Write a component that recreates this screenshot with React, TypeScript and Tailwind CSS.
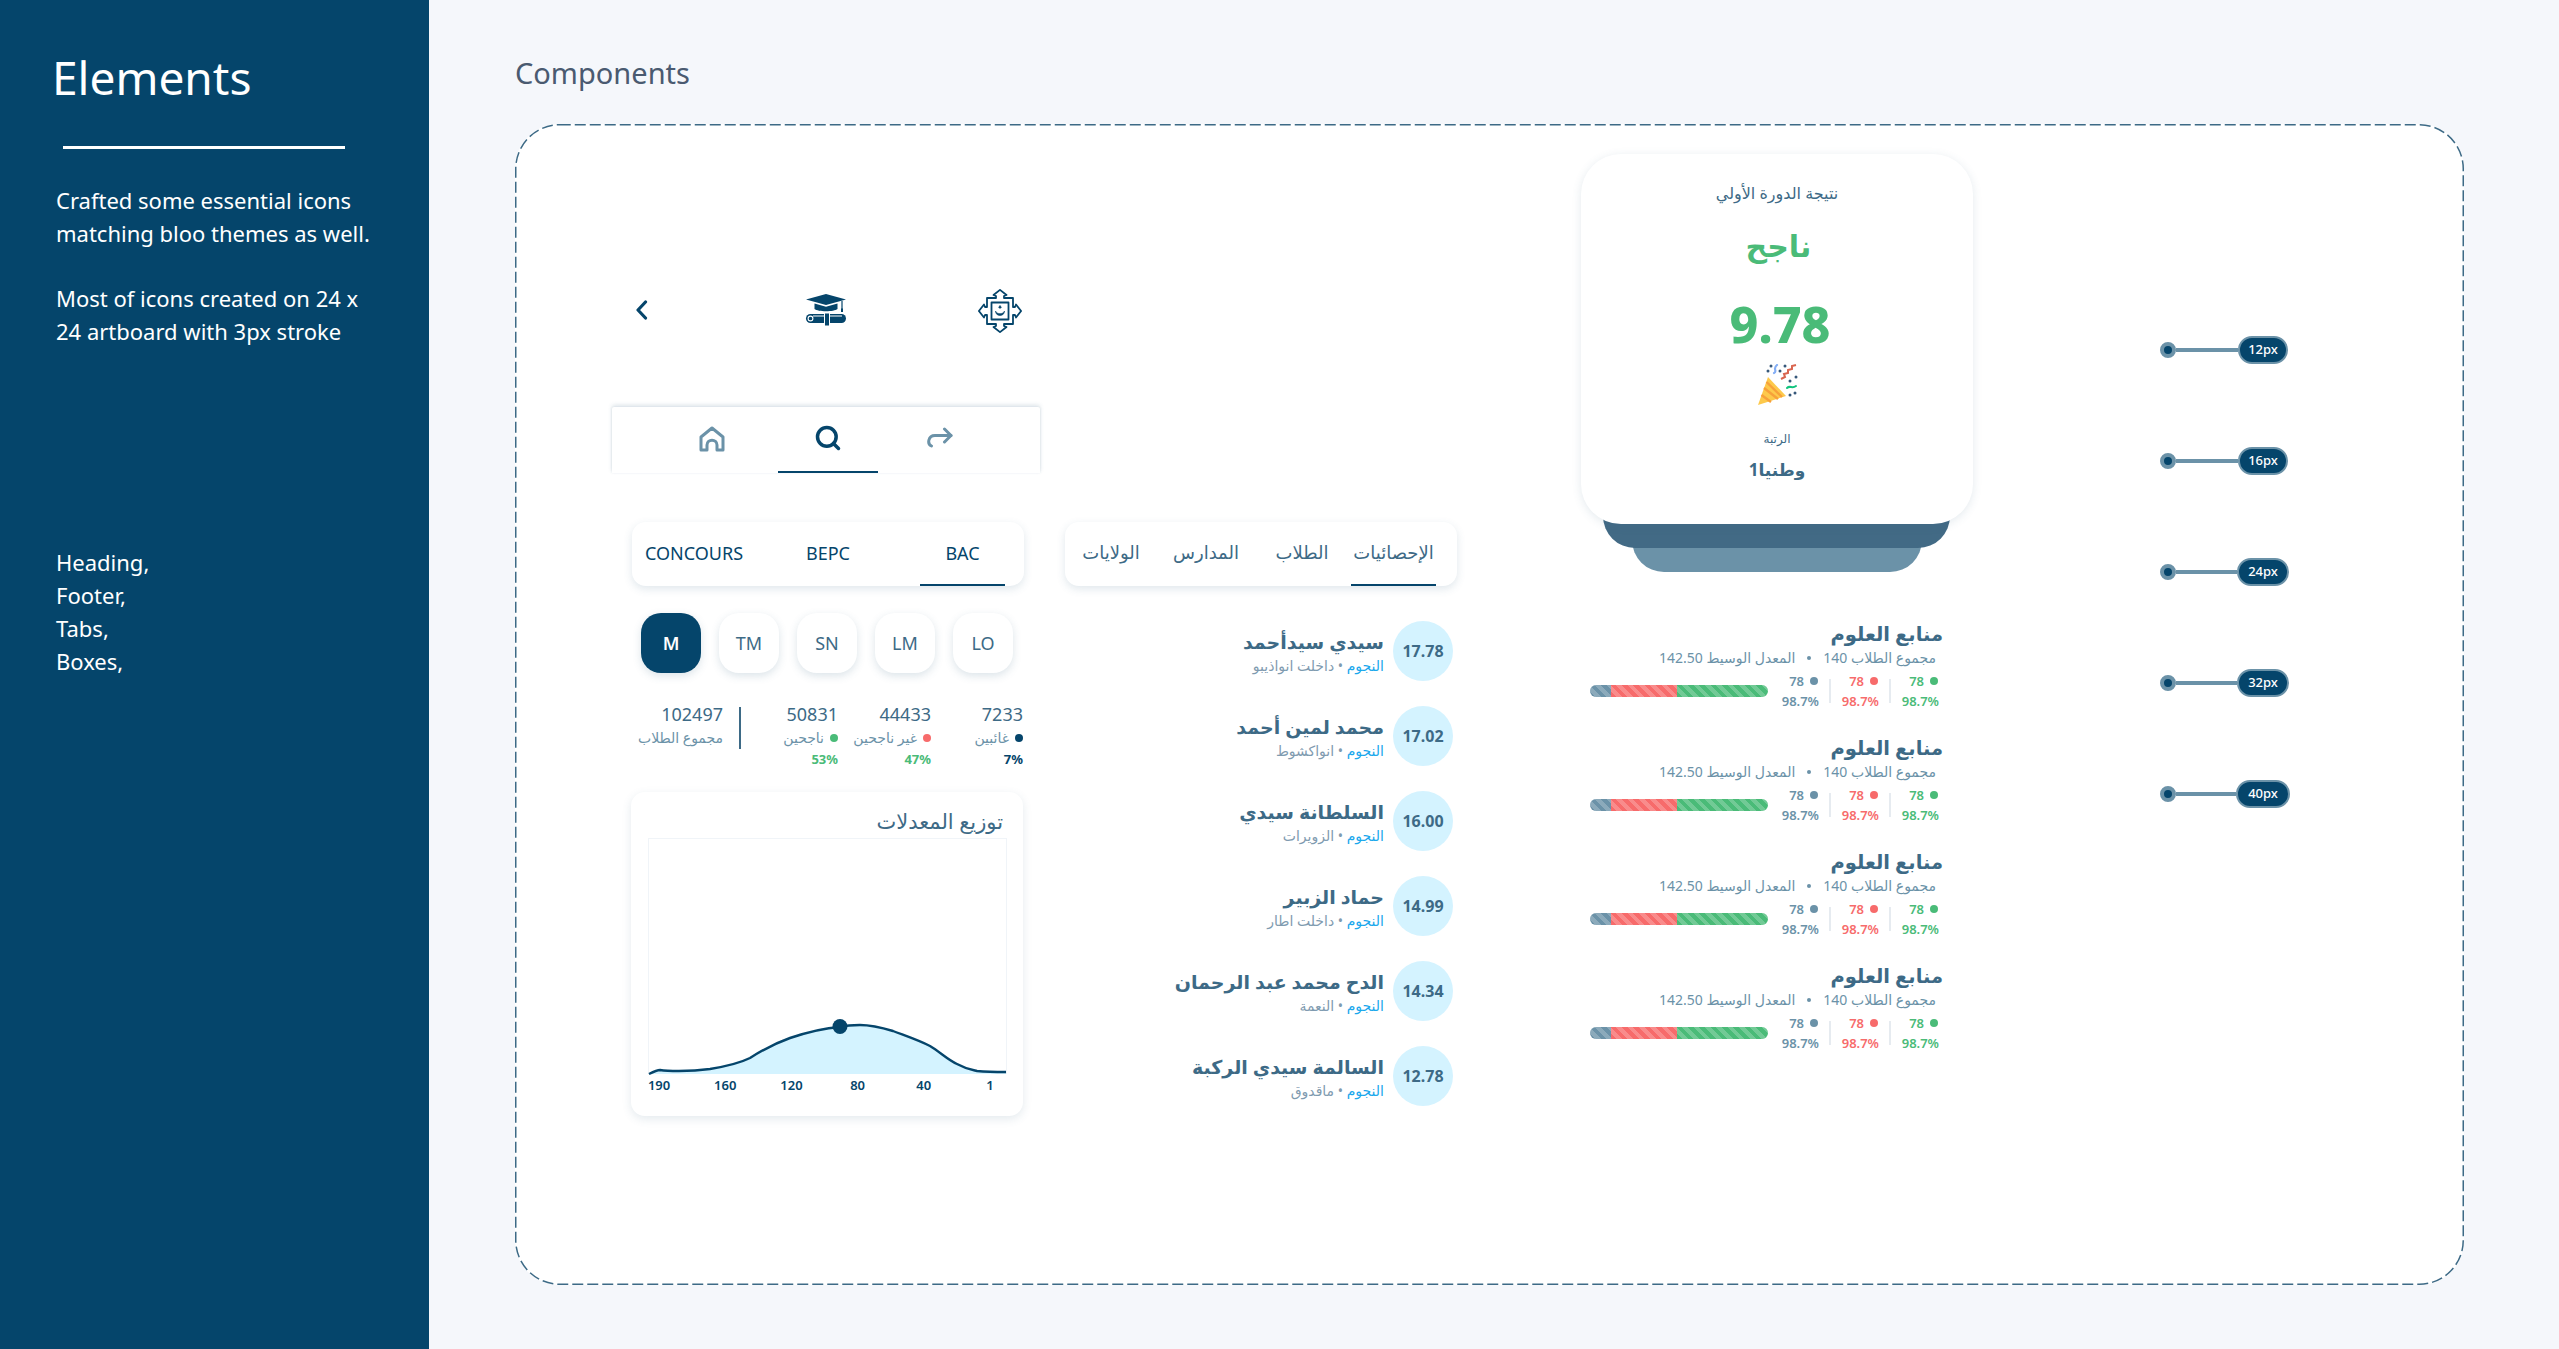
import React from 'react';
import { Search } from 'lucide-react';

const FONT = "font-['Noto_Sans','DejaVu_Sans',sans-serif]";
const CURVE =
  'M1 236 C5 234 9 232 12 232 C18 233 40 234 62 231 C80 228 92 225 102 220 C116 211 128 205 142 200 C160 194 178 190 192 189 C200 187 206 187 212 187 C225 187 235 190 245 193 C258 198 270 202 282 208 C292 214 300 222 309 226 C318 231 325 232 329 233 C340 234 350 234 358 234';

const Chevron = () => (
  <svg width="14" height="20" viewBox="0 0 14 20" fill="none" stroke="#05456b" strokeWidth="3.2" strokeLinecap="round" strokeLinejoin="round">
    <path d="M10.5 2 L3 10 L10.5 18" />
  </svg>
);

const GradCap = () => (
  <svg width="42" height="32" viewBox="0 0 42 32">
    <path d="M21 0 L41 5.5 L21 11 L1 5.5 Z" fill="#05456b" />
    <path d="M9.5 9.5 L21 12.8 L32.5 9.5 V15 C29 18 13 18 9.5 15 Z" fill="#05456b" />
    <path d="M37 7 V15" stroke="#05456b" strokeWidth="1.2" />
    <rect x="36" y="14.5" width="2" height="3.5" fill="#05456b" />
    <rect x="1" y="20" width="40" height="9" rx="4.5" fill="#05456b" />
    <circle cx="5.5" cy="24.5" r="2.4" fill="none" stroke="#fff" strokeWidth="1.1" />
    <path d="M8 22 H19 M24 22 H37" stroke="#fff" strokeWidth="1" />
    <rect x="19.5" y="19" width="5" height="13" fill="#05456b" stroke="#fff" strokeWidth="1" />
  </svg>
);

const Emblem = () => (
  <svg width="44" height="44" viewBox="0 0 44 44" fill="none" stroke="#05456b" strokeLinejoin="round">
    <path
      strokeWidth="1.8"
      d="M9 9 H18 V7 L15.5 6 L22 0.9 L28.5 6 L26 7 V9 H35 V18 H37 L38 15.5 L43.1 22 L38 28.5 L37 26 H35 V35 H26 V37 L28.5 38 L22 43.1 L15.5 38 L18 37 V35 H9 V26 H7 L6 28.5 L0.9 22 L6 15.5 L7 18 H9 Z"
    />
    <rect x="13.5" y="13.5" width="17" height="17" strokeWidth="1.8" />
    <path d="M17.5 22 C17.5 28 26.5 28 26.5 22 C25.5 25.5 18.5 25.5 17.5 22 Z" fill="#05456b" strokeWidth="0.6" />
    <path d="M22 16.5 L23 19 L21 19 Z M20.4 18.2 H23.6" fill="#05456b" strokeWidth="0.8" />
  </svg>
);

const HomeIcon = () => (
  <svg width="26" height="26" viewBox="0 0 26 26" fill="none" stroke="#6b92a8" strokeWidth="3" strokeLinejoin="round" strokeLinecap="round">
    <path d="M2 11 L13 2 L24 11 V24 H18 V19 C18 12.5 8 12.5 8 19 V24 H2 Z" />
  </svg>
);

const ShareIcon = () => (
  <svg width="26" height="22" viewBox="0 0 26 22" fill="none" stroke="#6b92a8" strokeWidth="3" strokeLinejoin="round" strokeLinecap="round">
    <path d="M17.5 2 L24 8.5 L17.5 15" />
    <path d="M24 8.5 H8 C1 8.5 0 17 4.5 19" />
  </svg>
);

const Popper = () => (
  <svg width="42" height="42" viewBox="0 0 42 42" fill="none">
    <path d="M1 41 L11 13 L29 32 Z" fill="#fdc94b" />
    <path d="M7 24 L21 35 M9.5 18 L25 33 M4.5 31 L14 38" stroke="#f7a13a" strokeWidth="2.4" />
    <path d="M24 15 L28 13 L27 10 L31 9 L31 6 L35 5 L35 2 L39 1" stroke="#d9654f" strokeWidth="2" />
    <path d="M17 9 C21 7 15 5 20 1" stroke="#84aef5" strokeWidth="2.2" strokeLinecap="round" />
    <path d="M30 24 C33 21 35 25 39 22" stroke="#12c47e" strokeWidth="2" strokeLinecap="round" />
    <g fill="#36587a">
      <circle cx="11" cy="7" r="1.5" />
      <circle cx="14" cy="2" r="1.5" />
      <circle cx="23" cy="7" r="1.5" />
      <circle cx="28" cy="2" r="1.5" />
      <circle cx="33" cy="17" r="1.5" />
      <circle cx="39" cy="13" r="1.5" />
      <circle cx="38" cy="29" r="1.5" />
      <circle cx="33" cy="31" r="1.5" />
    </g>
  </svg>
);

const Chart = () => (
  <svg width="360" height="238" viewBox="0 0 360 238" className="block overflow-visible">
    <rect x="0.5" y="0.5" width="358" height="235" fill="#fff" stroke="#f0f4f8" />
    <path d={`${CURVE} V236 Z`} fill="#d4f3ff" />
    <path d={CURVE} fill="none" stroke="#05456b" strokeWidth="2.4" />
    <circle cx="192" cy="188.5" r="7.5" fill="#05456b" />
  </svg>
);

const tabsFr = [
  { label: 'CONCOURS', cls: 'w-[170px] pl-[13px] text-left' },
  { label: 'BEPC', cls: 'w-[52px] text-center' },
  { label: 'BAC', cls: 'w-[85px] ml-[66px] text-center border-b-2 border-[#05456b]' },
];
const tabsAr = [
  { label: 'الإحصائيات', cls: 'w-[85px] border-b-2 border-[#05456b]' },
  { label: 'الطلاب', cls: 'w-[70px] mr-[14px]' },
  { label: 'المدارس', cls: 'w-[90px] mr-[16px]' },
  { label: 'الولايات', cls: 'w-[80px] mr-[10px]' },
];
const pills = ['M', 'TM', 'SN', 'LM', 'LO'];
const stats = [
  { n: '7233', label: 'غائبين', dot: 'bg-[#05456b]', pct: '7%', pctCls: 'text-[#05456b]', cls: 'w-[92px]' },
  { n: '44433', label: 'غير ناجحين', dot: 'bg-[#f76b6b]', pct: '47%', pctCls: 'text-[#4abb78]', cls: 'w-[93px]' },
  { n: '50831', label: 'ناجحين', dot: 'bg-[#4abb78]', pct: '53%', pctCls: 'text-[#4abb78]', cls: 'w-[97px]' },
];
const students = [
  { score: '17.78', name: 'سيدي سيدأحمد', place: 'داخلت انواذيبو' },
  { score: '17.02', name: 'محمد لمين أحمد', place: 'انواكشوط' },
  { score: '16.00', name: 'السلطانة سيدي', place: 'الزويرات' },
  { score: '14.99', name: 'حماد الزبير', place: 'داخلت اطار' },
  { score: '14.34', name: 'الدح محمد عبد الرحمان', place: 'النعمة' },
  { score: '12.78', name: 'السالمة سيدي الركبة', place: 'ماقدوق' },
];
const bars = [0, 1, 2, 3];
const groups = [
  { text: 'text-[#6b92a8]', dot: 'bg-[#6b92a8]' },
  { text: 'text-[#f76b6b]', dot: 'bg-[#f76b6b]' },
  { text: 'text-[#4abb78]', dot: 'bg-[#4abb78]' },
];
const sizes = [
  { label: '12px', cls: 'w-[50px] mr-[2px]' },
  { label: '16px', cls: 'w-[50px] mr-[2px]' },
  { label: '24px', cls: 'w-[52px] mr-[1px]' },
  { label: '32px', cls: 'w-[52px] mr-[1px]' },
  { label: '40px', cls: 'w-[54px]' },
];

function SubjectRow() {
  return (
    <div className="h-[114px]">
      <div dir="rtl" className="pt-[1px] pr-[30px] text-[19.5px] leading-[25px] font-bold text-[#3d6a86]">منابع العلوم</div>
      <div dir="rtl" className="pr-[37px] mt-[2px] text-[14px] leading-[20px] text-[#6b92a8] flex items-center gap-[12px]">
        <span>مجموع الطلاب 140</span>
        <span className="w-[4px] h-[4px] rounded-full bg-[#6b92a8]" />
        <span>المعدل الوسيط 142.50</span>
      </div>
      <div className="flex items-center pl-[9px] mt-[1px]">
        <div className="flex w-[178px] h-[12px] rounded-full overflow-hidden">
          <div className="w-[21px] bg-[#6b92a8] bg-[repeating-linear-gradient(45deg,transparent_0,transparent_4px,rgba(255,255,255,0.22)_4px,rgba(255,255,255,0.22)_8px)]" />
          <div className="w-[66px] bg-[#f76b6b] bg-[repeating-linear-gradient(45deg,transparent_0,transparent_4px,rgba(255,255,255,0.22)_4px,rgba(255,255,255,0.22)_8px)]" />
          <div className="flex-1 bg-[#4abb78] bg-[repeating-linear-gradient(45deg,transparent_0,transparent_4px,rgba(255,255,255,0.22)_4px,rgba(255,255,255,0.22)_8px)]" />
        </div>
        <div className="flex ml-[3px] items-center">
          {groups.map((g, i) => (
            <div key={i} className="w-[60px] h-[44px] flex items-center justify-between">
              <div className={`w-[47px] ${g.text} text-[13px] font-semibold leading-[20px] text-right`}>
                <div className="flex items-center justify-end gap-[6px]">
                  <span>78</span>
                  <span className={`w-[8px] h-[8px] rounded-full ${g.dot}`} />
                </div>
                <div className="whitespace-nowrap -mr-[1px] -ml-[4px]">98.7%</div>
              </div>
              {i < 2 && <div className="w-[2px] h-[24px] bg-[#e6ebf0]" />}
            </div>
          ))}
        </div>
      </div>
    </div>
  );
}

export default function App() {
  return (
    <div className={`flex w-[2559px] h-[1349px] bg-[#f5f7fb] overflow-hidden ${FONT}`}>
      <aside className="w-[429px] shrink-0 bg-[#05456b] text-white pl-[56px]">
        <h1 className="mt-[46px] -ml-[4px] text-[46px] leading-[62px] font-normal">Elements</h1>
        <div className="mt-[38px] ml-[7px] w-[282px] h-[3px] bg-white" />
        <p className="mt-[35px] text-[22px] leading-[33px]">
          Crafted some essential icons
          <br />
          matching bloo themes as well.
        </p>
        <p className="mt-[32px] text-[22px] leading-[33px]">
          Most of icons created on 24 x
          <br />
          24 artboard with 3px stroke
        </p>
        <p className="mt-[198px] text-[22px] leading-[33px]">
          Heading,
          <br />
          Footer,
          <br />
          Tabs,
          <br />
          Boxes,
        </p>
      </aside>

      <main className="flex-1 pl-[86px]">
        <h2 className="pt-[52px] text-[29px] leading-[42px] text-[#4a5a70] font-normal">Components</h2>
        <div className="relative mt-[30px] w-[1949px] h-[1161px] bg-white rounded-[44px] flex items-start pl-[95px]">
          <svg className="absolute inset-0 w-full h-full pointer-events-none" fill="none">
            <rect x="0.75" y="0.75" width="1947.5" height="1159.5" rx="44" stroke="#3d6a86" strokeWidth="1.5" strokeDasharray="11 4" />
          </svg>

          {/* icons, tabs, stats and chart */}
          <section className="w-[432px] shrink-0 mt-[164px]">
            <div className="h-[44px] flex items-center">
              <div className="ml-[25px]"><Chevron /></div>
              <div className="ml-[156px]"><GradCap /></div>
              <div className="ml-[131px] mt-[2px]"><Emblem /></div>
            </div>

            <div className="mt-[75px] ml-[2px] w-[428px] h-[66px] bg-white rounded-t-[2px] shadow-[0_-2px_4px_rgba(61,106,134,0.18),-1px_0_2px_rgba(61,106,134,0.06),1px_0_2px_rgba(61,106,134,0.06)] flex">
              <div className="ml-[87px] mt-[19px]"><HomeIcon /></div>
              <div className="ml-[53px] w-[100px] h-[66px] border-b-2 border-[#05456b] flex justify-center pt-[17px]">
                <Search size={28} color="#05456b" strokeWidth={3} />
              </div>
              <div className="ml-[49px] mt-[20px]"><ShareIcon /></div>
            </div>

            <div className="mt-[49px] ml-[22px] w-[392px] h-[64px] bg-white rounded-[14px] shadow-[0_3px_8px_rgba(61,106,134,0.16)] flex items-stretch text-[18px] text-[#05456b]">
              {tabsFr.map((t) => (
                <div key={t.label} className={`${t.cls} leading-[62px]`}>{t.label}</div>
              ))}
            </div>

            <div className="mt-[27px] ml-[31px] flex gap-[18px]">
              {pills.map((p, i) => (
                <div
                  key={p}
                  className={`w-[60px] h-[60px] rounded-[20px] flex items-center justify-center text-[18px] shadow-[0_3px_8px_rgba(61,106,134,0.18)] ${
                    i === 0 ? 'bg-[#05456b] text-white font-semibold' : 'bg-white text-[#3d6a86]'
                  }`}
                >
                  {p}
                </div>
              ))}
            </div>

            <div className="mt-[28px] flex items-start text-[#3d6a86]">
              <div className="w-[113px] text-right">
                <div className="text-[18px] leading-[26px]">102497</div>
                <div className="mt-[1px] text-[14px] leading-[20px] whitespace-nowrap text-[#6b92a8]" dir="rtl">مجموع الطلاب</div>
              </div>
              <div className="ml-[16px] mt-[6px] w-[2px] h-[42px] bg-[#3d6a86]" />
              <div className="flex flex-row-reverse">
                {stats.map((s) => (
                  <div key={s.n} className={`${s.cls} text-right`}>
                    <div className="text-[18px] leading-[26px]">{s.n}</div>
                    <div className="mt-[1px] flex justify-end items-center gap-[6px] text-[14px] leading-[20px] text-[#6b92a8] whitespace-nowrap" dir="ltr">
                      <span dir="rtl">{s.label}</span>
                      <span className={`w-[8px] h-[8px] rounded-full ${s.dot}`} />
                    </div>
                    <div className={`mt-[3px] text-[13px] leading-[16px] font-bold ${s.pctCls}`}>{s.pct}</div>
                  </div>
                ))}
              </div>
            </div>

            <div className="mt-[25px] ml-[21px] w-[392px] h-[324px] bg-white rounded-[14px] shadow-[0_3px_10px_rgba(61,106,134,0.14)]">
              <div dir="rtl" className="pt-[15px] pr-[20px] text-[21px] leading-[28px] text-[#3d6a86]">توزيع المعدلات</div>
              <div className="ml-[17px] mt-[3px]"><Chart /></div>
              <div className="-ml-[5px] flex text-[13px] leading-[18px] font-semibold text-[#05456b]">
                {['190', '160', '120', '80', '40', '1'].map((a) => (
                  <span key={a} className="w-[67.6px] text-center">{a}</span>
                ))}
              </div>
            </div>
          </section>

          {/* arabic tabs and ranking */}
          <section className="w-[392px] shrink-0 ml-[23px] mt-[398px]">
            <div dir="rtl" className="h-[64px] bg-white rounded-[14px] shadow-[0_3px_8px_rgba(61,106,134,0.16)] flex pr-[21px] text-[18px] text-[#3d6a86]">
              {tabsAr.map((t) => (
                <div key={t.label} className={`${t.cls} text-center leading-[60px] whitespace-nowrap`}>{t.label}</div>
              ))}
            </div>
            <div className="mt-[35px] flex flex-col gap-[25px]">
              {students.map((s) => (
                <div key={s.score} dir="rtl" className="flex items-center h-[60px] pr-[4px]">
                  <div className="w-[60px] h-[60px] rounded-full bg-[#d4f3ff] flex items-center justify-center text-[16px] font-bold text-[#3d6a86]" dir="ltr">
                    {s.score}
                  </div>
                  <div className="mr-[9px] pt-[3px]">
                    <div className="text-[19px] leading-[26px] font-bold text-[#3d6a86] whitespace-nowrap">{s.name}</div>
                    <div className="mt-[1px] text-[14px] leading-[20px] text-[#7f9bb0] whitespace-nowrap">
                      <span className="text-[#1aa7ec]">النجوم</span> • {s.place}
                    </div>
                  </div>
                </div>
              ))}
            </div>
          </section>

          {/* result card and subject rows */}
          <section className="w-[392px] shrink-0 ml-[124px] mt-[30px]">
            <div className="relative h-[418px]">
              <div className="absolute left-[51px] top-[300px] w-[290px] h-[118px] bg-[#6b92a8] rounded-b-[32px]" />
              <div className="absolute left-[22px] top-[300px] w-[347px] h-[94px] bg-[#426a85] rounded-b-[32px]" />
              <div className="relative h-[370px] bg-white rounded-[40px] shadow-[0_2px_10px_rgba(61,106,134,0.14)] flex flex-col items-center text-center">
                <div className="mt-[26px] text-[16px] leading-[26px] text-[#3d6a86]">نتيجة الدورة الأولي</div>
                <div className="mt-[17px] ml-[3px] text-[30px] leading-[46px] font-bold text-[#4abb78]">ناجح</div>
                <div className="mt-[21px] ml-[6px] text-[50px] leading-[68px] font-extrabold text-[#4abb78]">9.78</div>
                <div className="mt-[6px] ml-[2px]"><Popper /></div>
                <div className="mt-[24px] text-[12px] leading-[18px] text-[#3d6a86]">الرتبة</div>
                <div className="mt-[9px] text-[17px] leading-[26px] font-bold text-[#3d6a86]">وطنيا1</div>
              </div>
            </div>
            <div className="mt-[48px]">
              {bars.map((b) => (
                <SubjectRow key={b} />
              ))}
            </div>
          </section>

          {/* size markers */}
          <section className="w-[130px] shrink-0 ml-[187px] mt-[212px] flex flex-col gap-[83px]">
            {sizes.map((s) => (
              <div key={s.label} className="flex items-center h-[28px]">
                <div className="w-[16px] h-[16px] rounded-full bg-[#05456b] border-[4px] border-[#6b92a8] shrink-0" />
                <div className="flex-1 h-[4px] bg-[#6b92a8]" />
                <div className={`${s.cls} h-[28px] rounded-full bg-[#05456b] border-2 border-[#6b92a8] flex items-center justify-center text-[13px] font-medium text-white`}>
                  {s.label}
                </div>
              </div>
            ))}
          </section>
        </div>
      </main>
    </div>
  );
}
